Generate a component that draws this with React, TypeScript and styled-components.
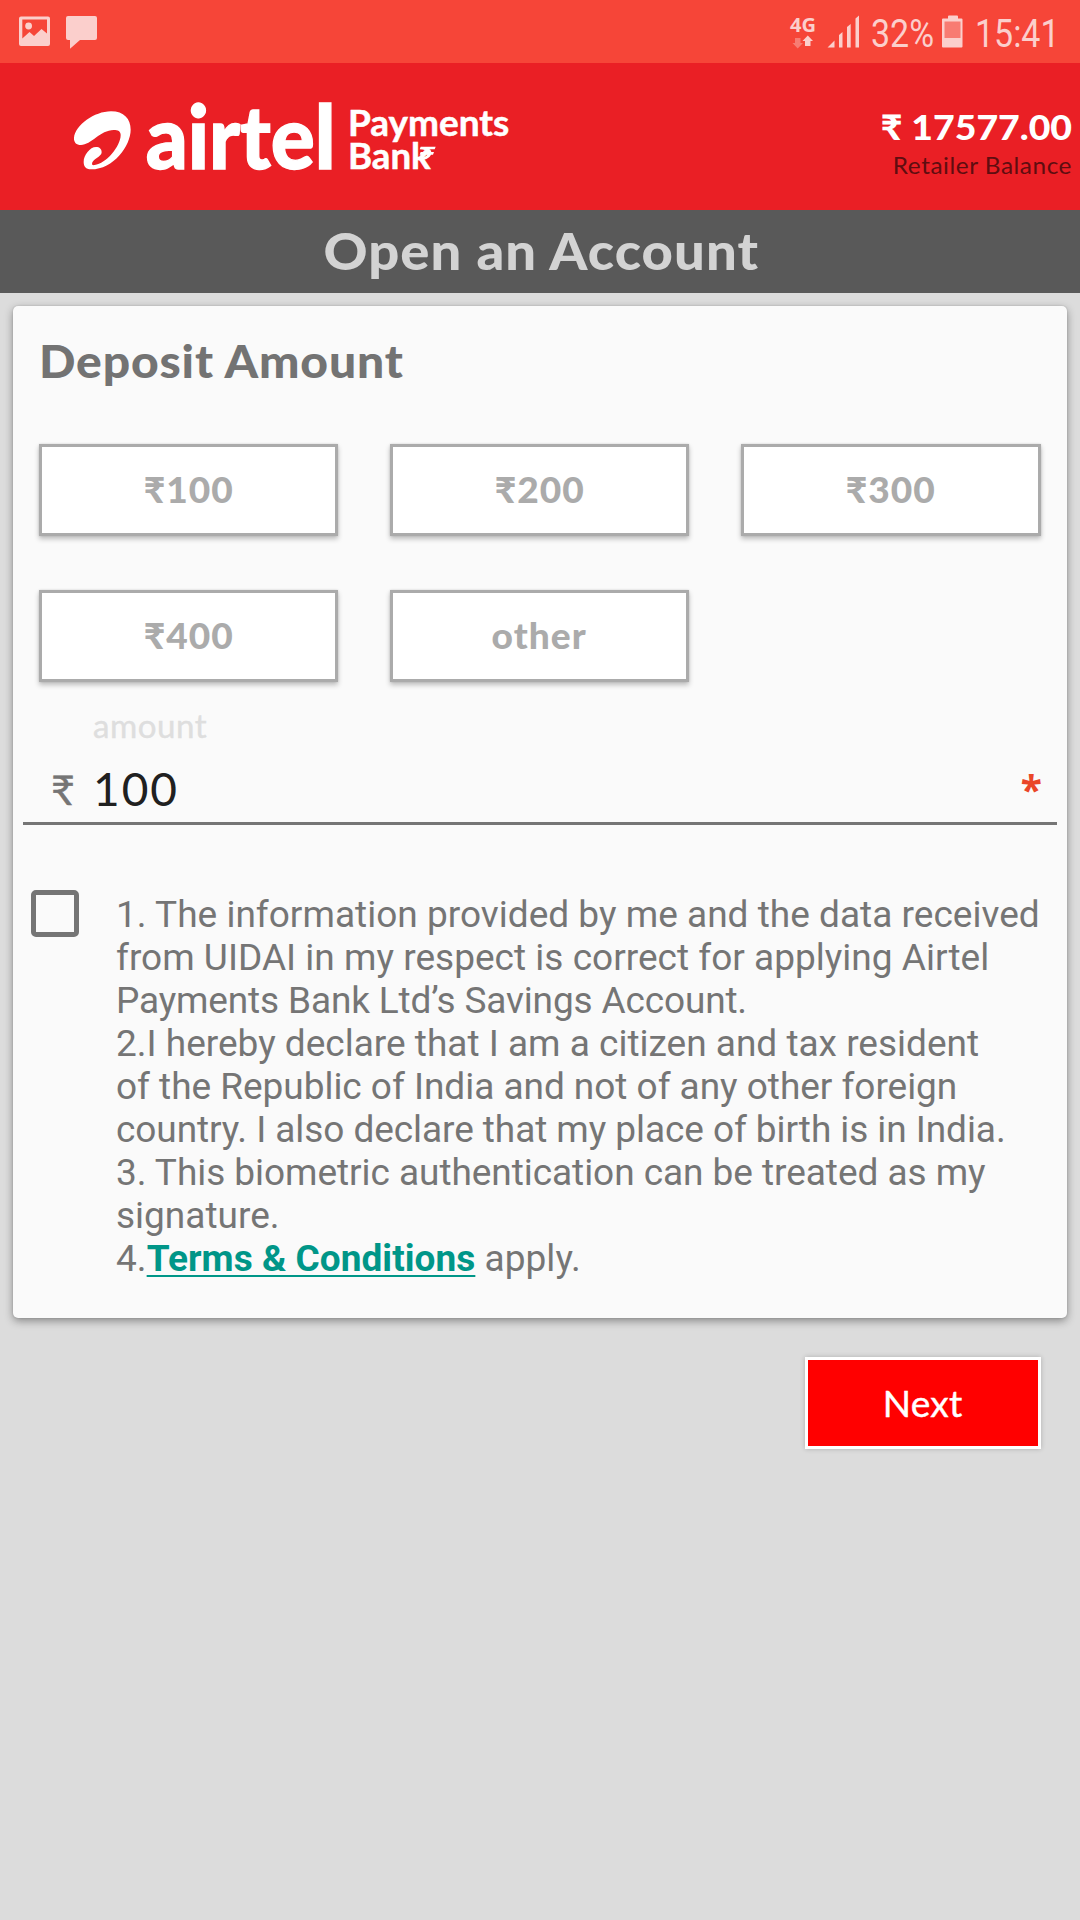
import React, { useState } from "react";
import styled, { createGlobalStyle } from "styled-components";

const GlobalStyle = createGlobalStyle`
  * { box-sizing: border-box; }
  body { margin: 0; background: #dcdcdc; }
  button { margin: 0; padding: 0; border-radius: 0; font: inherit; }
`;

const Screen = styled.div`
  display: flex;
  flex-direction: column;
  width: 1080px;
  height: 1920px;
  overflow: hidden;
  background: #dcdcdc;
  font-family: Lato, "Open Sans", sans-serif;
`;

const Wide = styled.span<{ $by: number; $from?: string }>`
  display: inline-block;
  transform: scaleX(${(p) => p.$by});
  transform-origin: ${(p) => p.$from ?? "center"};
`;

const StatusBar = styled.div`
  display: flex;
  justify-content: space-between;
  height: 63px;
  background: #f64538;
`;

const Condensed = styled.span<{ $width: number }>`
  flex: none;
  width: ${(p) => p.$width}px;
  font: 400 39px/68px Roboto, sans-serif;
  color: #fbcfcc;
  white-space: nowrap;
  transform: scaleX(0.87);
  transform-origin: 0 0;
`;

const StatusRight = styled.div`
  display: flex;
  gap: 9px;
  width: 310px;
`;

const Header = styled.header`
  display: flex;
  justify-content: space-between;
  height: 147px;
  padding: 27px 8px 0 60px;
  background: #ea1f25;
`;

const Balance = styled.div`
  display: flex;
  flex-direction: column;
  align-items: flex-end;
  white-space: nowrap;
`;

const BalanceValue = styled.div`
  color: #fff;
  font-size: 35px;
  font-weight: 900;
  line-height: 72px;
`;

const BalanceLabel = styled.div`
  margin-top: -12px;
  font-size: 23px;
  line-height: 30px;
  letter-spacing: 0.5px;
  color: #5f0d10;
`;

const PageTitle = styled.h1`
  height: 83px;
  margin: 0;
  padding-left: 3px;
  background: #595959;
  color: #d3d3d3;
  font-size: 51px;
  font-weight: 900;
  line-height: 81px;
  letter-spacing: 1px;
  text-align: center;
`;

const Card = styled.section`
  display: flex;
  flex-direction: column;
  height: 1012px;
  margin: 13px 13px 0;
  border-radius: 5px;
  background: #fafafa;
  box-shadow: 0 3px 9px rgba(0, 0, 0, 0.38), 0 0 2px rgba(0, 0, 0, 0.15);
`;

const CardTitle = styled.h2`
  margin: 1px 0 29px 26px;
  color: #737373;
  font-size: 46px;
  font-weight: 900;
  line-height: 108px;
  letter-spacing: 0.8px;
`;

const AmountGrid = styled.div`
  display: grid;
  grid-template-columns: 299px 299px 300px;
  gap: 54px 52px;
  padding: 0 26px;
`;

const AmountButton = styled.button`
  height: 92px;
  padding-bottom: 3px;
  border: 3px solid #ababab;
  background: #fff;
  box-shadow: 0 3px 5px rgba(0, 0, 0, 0.24), 0 0 2px rgba(0, 0, 0, 0.12);
  color: #ababab;
  font-size: 36px;
  font-weight: 900;
  line-height: 82px;
  letter-spacing: 1px;
`;

const FieldLabel = styled.label`
  margin: 24px 0 0 80px;
  color: #dedede;
  font-size: 32px;
  line-height: 40px;
  letter-spacing: 0.5px;
  -webkit-text-stroke: 0.4px #dedede;
`;

const Field = styled.div`
  display: flex;
  height: 79px;
  margin: 0 10px;
  border-bottom: 3px solid #757575;
`;

const Currency = styled.span`
  width: 70px;
  padding-left: 28px;
  color: #757575;
  font-size: 41px;
  line-height: 87px;
  -webkit-text-stroke: 0.5px #757575;
`;

const FieldValue = styled.span`
  flex: 1;
  color: #202020;
  font-size: 46px;
  line-height: 86px;
  letter-spacing: 2px;
`;

const Required = styled.span`
  margin-right: 15px;
  color: #ea4628;
  font: 700 39px/86px "Noto Sans", sans-serif;
`;

const Declaration = styled.div`
  display: flex;
  margin-top: 63px;
  padding-left: 18px;
`;

const Checkbox = styled.button<{ $checked: boolean }>`
  flex: none;
  width: 48px;
  height: 47px;
  margin-top: 2px;
  border: 5px solid #757575;
  border-radius: 5px;
  background: ${(p) => (p.$checked ? "#009688" : "transparent")};
`;

const Legal = styled.div`
  display: flex;
  flex-direction: column;
  margin: 5px 0 0 37px;
  color: #757575;
  font: 400 37px/43px Roboto, sans-serif;
`;

const LegalLine = styled.span<{ $tracking: number }>`
  letter-spacing: ${(p) => p.$tracking}px;
  white-space: nowrap;
`;

const TermsLink = styled.a`
  color: #009688;
  font-weight: 700;
  text-decoration: underline;
  text-decoration-thickness: 2px;
  text-underline-offset: 4px;
`;

const NextButton = styled.button`
  align-self: flex-end;
  width: 236px;
  height: 92px;
  margin: 39px 39px 0 0;
  padding-bottom: 1px;
  border: 3px solid #fff;
  background: #ff0000;
  box-shadow: 0 0 5px rgba(0, 0, 0, 0.2);
  color: #fff;
  font-size: 36px;
  line-height: 84px;
  letter-spacing: 0.2px;
  -webkit-text-stroke: 0.4px #fff;
`;

const LogoSvg = styled.svg`
  margin-top: 1px;
  overflow: visible;
`;

const Notifications = () => (
  <svg width="110" height="63" viewBox="0 0 110 63" fill="#fbcfcc">
    <path
      fillRule="evenodd"
      d="M21 16.500h27a2 2 0 0 1 2 2V44a2 2 0 0 1-2 2H21a2 2 0 0 1-2-2V18.500a2 2 0 0 1 2-2ZM22.300 19.500V38.500l7.200-6.500 4.500 4 7.500-7 5.500 4.500V19.500Z"
    />
    <circle cx="28.600" cy="26" r="3.400" />
    <path d="M68 16h27a2 2 0 0 1 2 2V38a2 2 0 0 1-2 2H80l-10 8.800V40H68a2 2 0 0 1-2-2V18a2 2 0 0 1 2-2Z" />
  </svg>
);

const Network = () => (
  <svg width="92" height="63" viewBox="0 0 92 63" fill="#fbcfcc">
    <text x="20" y="31.500" fontFamily="Noto Sans" fontWeight="700" fontSize="20" textLength="26" lengthAdjust="spacingAndGlyphs">
      4G
    </text>
    <path d="M25 38h5.500v5H33l-5.300 5.500L22.500 43H25Z" opacity="0.4" />
    <path d="M35 46v-5h-2.500l5.300-5.500 5.200 5.500h-2.500v5Z" />
    <path d="M57.500 47.500 64.500 40.500V47.500ZM69 35l3.500-3V47.500H69ZM77 27l3.700-3V47.500H77ZM85.500 18.500 89 15.500V47.500H85.500Z" />
  </svg>
);

const Battery = () => (
  <svg width="26" height="63" viewBox="0 0 26 63">
    <path fill="#fbcfcc" d="M9 15.500h8a1 1 0 0 1 1 1V18.500h3.500a1 1 0 0 1 1 1V46.500a1 1 0 0 1-1 1H3a1 1 0 0 1-1-1V19.500a1 1 0 0 1 1-1H8V16.500a1 1 0 0 1 1-1Z" />
    <path fill="#f87b72" d="M4.500 21.500h16V38h-16Z" />
  </svg>
);

const Logo = () => (
  <LogoSvg width="460" height="100" viewBox="0 0 1380 300" fill="#fff">
    <path d="M42 140C46 103 103 61 153 61C192 61 212 84 212 116C212 164 161 235 93 235C77 235 71 226 71 213C71 192 90 168 108 168C119 168 125 174 125 184C125 198 96 204 96 219C96 222 99 223 104 222C138 218 182 166 182 132C182 121 174 117 161 117C121 117 93 162 63 162C49 162 41 154 42 140Z" />
    <text x="257" y="235" fontFamily="Lato" fontWeight="900" fontSize="262" textLength="570" lengthAdjust="spacingAndGlyphs" stroke="#fff" strokeWidth="4">
      airtel
    </text>
    <text x="864" y="135" fontFamily="Lato" fontWeight="700" fontSize="106" textLength="484" lengthAdjust="spacingAndGlyphs" stroke="#fff" strokeWidth="1.500">
      Payments
    </text>
    <text x="864" y="235" fontFamily="Lato" fontWeight="700" fontSize="106" textLength="248" lengthAdjust="spacingAndGlyphs" stroke="#fff" strokeWidth="1.500">
      Bank
    </text>
    <path d="M1082 167H1127L1124 175H1108Q1113 179 1114 183H1122L1119 191H1113Q1108 202 1092 206L1084 199Q1098 198 1102 191H1079L1082 183H1101Q1098 176 1079 175Z" />
  </LogoSvg>
);

const AMOUNTS = ["₹100", "₹200", "₹300", "₹400", "other"];

const TERMS: [string, number][] = [
  ["1. The information provided by me and the data received", 0.02],
  ["from UIDAI in my respect is correct for applying Airtel", 0.02],
  ["Payments Bank Ltd’s Savings Account.", -0.15],
  ["2.I hereby declare that I am a citizen and tax resident", 0],
  ["of the Republic of India and not of any other foreign", -0.03],
  ["country. I also declare that my place of birth is in India.", -0.07],
  ["3. This biometric authentication can be treated as my", -0.05],
  ["signature.", 0],
];

export default function App() {
  const [accepted, setAccepted] = useState(false);
  return (
    <Screen>
      <GlobalStyle />
      <StatusBar>
        <Notifications />
        <StatusRight>
          <Network />
          <Condensed $width={60}>32%</Condensed>
          <Battery />
          <Condensed $width={80}>15:41</Condensed>
        </StatusRight>
      </StatusBar>
      <Header>
        <Logo />
        <Balance>
          <BalanceValue>
            <Wide $by={1.068} $from="right">₹ 17577.00</Wide>
          </BalanceValue>
          <BalanceLabel>
            <Wide $by={1.06} $from="right">Retailer Balance</Wide>
          </BalanceLabel>
        </Balance>
      </Header>
      <PageTitle>
        <Wide $by={1.066}>Open an Account</Wide>
      </PageTitle>
      <Card>
        <CardTitle>
          <Wide $by={1.044} $from="left">Deposit Amount</Wide>
        </CardTitle>
        <AmountGrid>
          {AMOUNTS.map((amount) => (
            <AmountButton key={amount}>
              <Wide $by={1.03}>{amount}</Wide>
            </AmountButton>
          ))}
        </AmountGrid>
        <FieldLabel>
          <Wide $by={1.035} $from="left">amount</Wide>
        </FieldLabel>
        <Field>
          <Currency>₹</Currency>
          <FieldValue>100</FieldValue>
          <Required>*</Required>
        </Field>
        <Declaration>
          <Checkbox $checked={accepted} aria-label="Accept" onClick={() => setAccepted(!accepted)} />
          <Legal>
            {TERMS.map(([line, tracking]) => (
              <LegalLine key={line} $tracking={tracking}>
                {line}
              </LegalLine>
            ))}
            <LegalLine $tracking={0.04}>
              4.<TermsLink>Terms &amp; Conditions</TermsLink> apply.
            </LegalLine>
          </Legal>
        </Declaration>
      </Card>
      <NextButton>
        <Wide $by={1.03}>Next</Wide>
      </NextButton>
    </Screen>
  );
}
